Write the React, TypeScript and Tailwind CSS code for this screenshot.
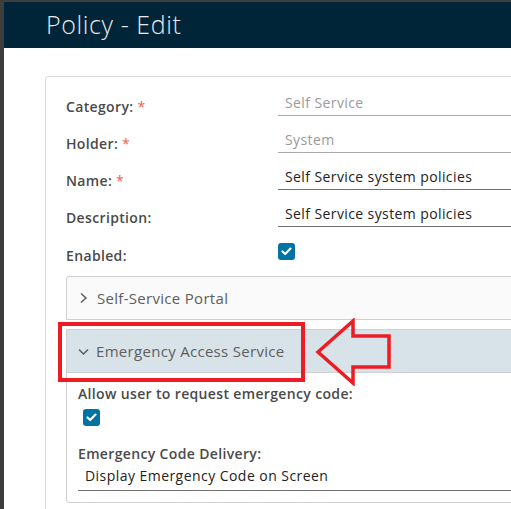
import React from 'react';

const font = { fontFamily: '"Open Sans", "Noto Sans", sans-serif' };

const Check: React.FC = () => (
    <div className="w-[17px] h-[17px] rounded-[3px] bg-[#0072a3] flex items-center justify-center">
        <svg width="11" height="9" viewBox="0 0 11 9" fill="none">
            <path d="M1.5 4.5 L4.2 7 L9.5 1.6" stroke="white" strokeWidth="2.2" strokeLinecap="round" strokeLinejoin="round" />
        </svg>
    </div>
);

const Row: React.FC<{ label: string; required?: boolean; value: string; disabled?: boolean }> = ({ label, required, value, disabled }) => (
    <div className="flex items-end h-[25px]">
        <div className="w-[212px] text-[14px] leading-[18px] font-semibold tracking-[0.35px] text-[#4a4a4a]">
            {label}
            {required && <span className="text-[#f35e4c] font-normal"> *</span>}
        </div>
        <div className={`flex-1 h-[25px] border-b pl-[7px] text-[14px] leading-[24px] tracking-[0.4px] ${disabled ? 'border-[#a8a8a8] text-[#9a9a9a]' : 'border-[#737373] text-[#222]'}`}>
            {value}
        </div>
    </div>
);

const App: React.FC = () => {
    return (
        <div className="relative w-[511px] h-[509px] overflow-hidden bg-[#3d3d3d] pt-[2px] pl-[4px]" style={font}>
            <div className="w-[560px] h-[520px] bg-white">
                {/* Header */}
                <div className="h-[46px] bg-[#002538] flex items-center pl-[42px]">
                    <h1 className="text-[25px] font-light text-[#e8e8e8] tracking-[0.6px]">Policy - Edit</h1>
                </div>

                {/* Card */}
                <div className="pt-[28px] pl-[41px]">
                    <div className="border border-[#dcdcdc] rounded-tl-[3px] pl-[20px] pt-[14px] h-[500px]">
                        <div className="flex flex-col gap-[12px]">
                            <Row label="Category:" required value="Self Service" disabled />
                            <Row label="Holder:" required value="System" disabled />
                            <Row label="Name:" required value="Self Service system policies" />
                            <Row label="Description:" value="Self Service system policies" />
                            <div className="flex items-start h-[25px]">
                                <div className="w-[212px] text-[14px] leading-[18px] font-semibold tracking-[0.35px] text-[#4a4a4a] mt-[8px]">Enabled:</div>
                                <div className="mt-[4px]">
                                    <Check />
                                </div>
                            </div>
                        </div>

                        {/* Accordion */}
                        <div className="mt-[12px] h-[44px] border border-[#cfcfcf] rounded-tl-[3px] bg-[#fafafa] flex items-center pl-[12px] gap-[9px] text-[#5e5e5e] text-[15px] tracking-[0.3px]">
                            <svg width="9" height="12" viewBox="0 0 9 12" fill="none">
                                <path d="M2 1.5 L7 6 L2 10.5" stroke="#5e5e5e" strokeWidth="1.5" />
                            </svg>
                            <span>Self-Service Portal</span>
                        </div>

                        <div className="mt-[9px] border border-[#cfcfcf] rounded-bl-[3px] h-[174px]">
                            <div className="h-[43px] bg-[#d8e3e9] border-b border-[#cfcfcf] flex items-center pl-[11px] gap-[7px] text-[#5e5e5e] text-[15px] tracking-[0.3px]">
                                <svg width="11" height="9" viewBox="0 0 11 9" fill="none">
                                    <path d="M1 2.5 L5.5 7 L10 2.5" stroke="#5e5e5e" strokeWidth="1.5" />
                                </svg>
                                <span>Emergency Access Service</span>
                            </div>
                            <div className="pl-[11px] pt-[12px]">
                                <div className="text-[14px] leading-[18px] font-semibold tracking-[0.35px] text-[#4a4a4a]">Allow user to request emergency code:</div>
                                <div className="mt-[6px] ml-[5px]">
                                    <Check />
                                </div>
                                <div className="mt-[19px] text-[14px] leading-[18px] font-semibold tracking-[0.35px] text-[#4a4a4a]">Emergency Code Delivery:</div>
                                <div className="h-[28px] border-b border-[#737373] pl-[7px] text-[14px] leading-[26px] tracking-[0.45px] text-[#222]">
                                    Display Emergency Code on Screen
                                </div>
                            </div>
                        </div>
                    </div>
                </div>
            </div>

            {/* Annotation: red box */}
            <div className="absolute left-[58px] top-[322px] w-[247px] h-[60px] border-[4px] border-[#ed1c24]" />
            {/* Annotation: red arrow */}
            <svg className="absolute left-[314px] top-[318px]" width="80" height="68" viewBox="0 0 80 68" fill="none">
                <path d="M4 34 L39 3 L39 18 L75 18 L75 49 L39 49 L39 65 Z" stroke="#ed1c24" strokeWidth="3.5" strokeLinejoin="miter" />
            </svg>
        </div>
    );
};

export default App;
